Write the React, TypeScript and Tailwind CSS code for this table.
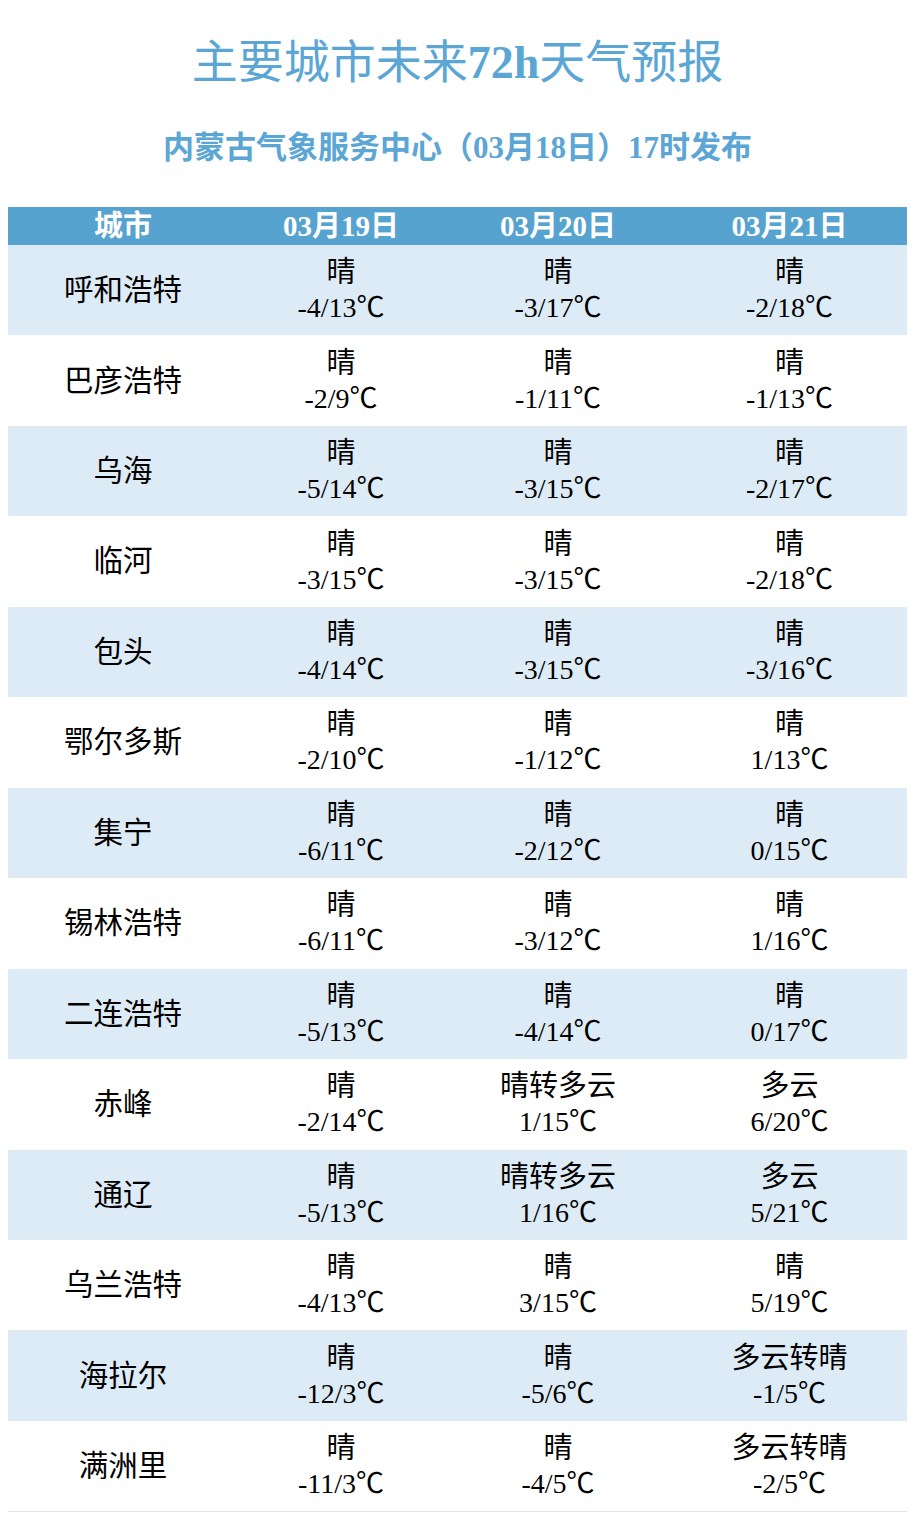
const rows: [string, [string, string], [string, string], [string, string]][] = [
  ['呼和浩特', ['晴', '-4/13℃'], ['晴', '-3/17℃'], ['晴', '-2/18℃']],
  ['巴彦浩特', ['晴', '-2/9℃'], ['晴', '-1/11℃'], ['晴', '-1/13℃']],
  ['乌海', ['晴', '-5/14℃'], ['晴', '-3/15℃'], ['晴', '-2/17℃']],
  ['临河', ['晴', '-3/15℃'], ['晴', '-3/15℃'], ['晴', '-2/18℃']],
  ['包头', ['晴', '-4/14℃'], ['晴', '-3/15℃'], ['晴', '-3/16℃']],
  ['鄂尔多斯', ['晴', '-2/10℃'], ['晴', '-1/12℃'], ['晴', '1/13℃']],
  ['集宁', ['晴', '-6/11℃'], ['晴', '-2/12℃'], ['晴', '0/15℃']],
  ['锡林浩特', ['晴', '-6/11℃'], ['晴', '-3/12℃'], ['晴', '1/16℃']],
  ['二连浩特', ['晴', '-5/13℃'], ['晴', '-4/14℃'], ['晴', '0/17℃']],
  ['赤峰', ['晴', '-2/14℃'], ['晴转多云', '1/15℃'], ['多云', '6/20℃']],
  ['通辽', ['晴', '-5/13℃'], ['晴转多云', '1/16℃'], ['多云', '5/21℃']],
  ['乌兰浩特', ['晴', '-4/13℃'], ['晴', '3/15℃'], ['晴', '5/19℃']],
  ['海拉尔', ['晴', '-12/3℃'], ['晴', '-5/6℃'], ['多云转晴', '-1/5℃']],
  ['满洲里', ['晴', '-11/3℃'], ['晴', '-4/5℃'], ['多云转晴', '-2/5℃']],
];

const cols = 'grid grid-cols-[230px_206px_228px_1fr]';

function Cell({ w, t }: { w: string; t: string }) {
  return (
    <div className="flex flex-col items-center justify-center leading-[35px]">
      <span className="text-[29px]">{w}</span>
      <span>{t}</span>
    </div>
  );
}

export default function App() {
  return (
    <div
      className="w-[915px] h-[1520px] bg-white text-black"
      style={{ fontFamily: '"Liberation Serif", "Noto Sans CJK SC", serif' }}
    >
      <div className="pt-[35px] text-center text-[46px] leading-[56px] text-[#5ba6d4]">
        主要城市未来<span className="font-bold">72h</span>天气预报
      </div>
      <div className="mt-[37px] text-center text-[31px] leading-[40px] font-bold text-[#5ba6d4]">
        内蒙古气象服务中心（03月18日）17时发布
      </div>

      <div className="mt-[39px] mx-[8px] w-[899px]">
        <div className={`${cols} h-[38px] bg-[#57a3cf] text-white text-[29px] font-bold leading-[38px]`}>
          <div className="text-center">城市</div>
          <div className="text-center">03月19日</div>
          <div className="text-center">03月20日</div>
          <div className="text-center">03月21日</div>
        </div>
        {rows.map((r, i) => (
          <div
            key={r[0]}
            className={`${cols} h-[90.46px] text-[28px] ${i % 2 === 0 ? 'bg-[#ddebf6]' : 'bg-white'}`}
          >
            <div className="flex items-center justify-center text-[29.5px]">{r[0]}</div>
            <Cell w={r[1][0]} t={r[1][1]} />
            <Cell w={r[2][0]} t={r[2][1]} />
            <Cell w={r[3][0]} t={r[3][1]} />
          </div>
        ))}
        <div className="h-px bg-[#e3e3e3]" />
      </div>
    </div>
  );
}
